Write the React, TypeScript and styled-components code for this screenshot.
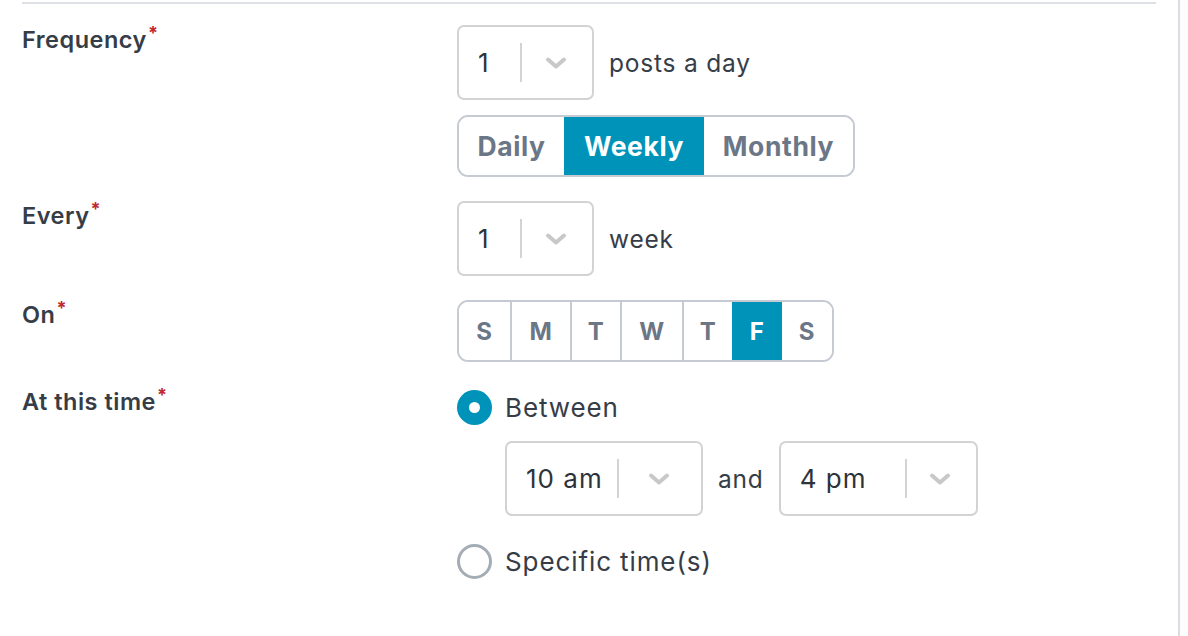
import styled, { createGlobalStyle } from "styled-components";

const GlobalStyle = createGlobalStyle`
  body {
    margin: 0;
    background: #fcfcfc;
    font-family: Inter, "Noto Sans", sans-serif;
  }
`;

const Panel = styled.div`
  width: 1180px;
  height: 636px;
  background: #ffffff;
  border-right: 2px solid #d9dde2;
  padding-top: 2px;
  box-sizing: border-box;
`;

const Divider = styled.div`
  height: 2px;
  margin: 0 22px;
  background: #dde1e6;
`;

const Form = styled.div`
  display: grid;
  grid-template-columns: 435px 1fr;
  row-gap: 24px;
  padding: 21px 0 0 22px;
`;

const Label = styled.div<{ $top?: number }>`
  font-size: 23.5px;
  line-height: 24px;
  font-weight: 600;
  color: #363d47;
  padding-top: ${(p) => p.$top ?? 3}px;
  letter-spacing: 0.5px;
`;

const Req = styled.sup`
  color: #c2262e;
  font-size: 18px;
  font-weight: 700;
  margin-left: 1px;
  vertical-align: 9px;
  line-height: 0;
`;

const Column = styled.div<{ $gap?: number }>`
  display: flex;
  flex-direction: column;
  align-items: flex-start;
  gap: ${(p) => p.$gap ?? 0}px;
`;

const Line = styled.div<{ $indent?: number; $top?: number }>`
  display: flex;
  align-items: center;
  gap: 15px;
  margin-left: ${(p) => p.$indent ?? 0}px;
  margin-top: ${(p) => p.$top ?? 0}px;
  font-size: 24.5px;
  letter-spacing: 0.8px;
  color: #363d47;
`;

const SelectBox = styled.div<{ $width: number }>`
  display: flex;
  align-items: center;
  width: ${(p) => p.$width}px;
  height: 75px;
  box-sizing: border-box;
  border: 2px solid #d3d3d3;
  border-radius: 7px;
  background: #fff;
`;

const SelectValue = styled.div<{ $width: number }>`
  width: ${(p) => p.$width}px;
  box-sizing: border-box;
  padding-left: 19px;
  font-size: 26px;
  letter-spacing: 1px;
  color: #2e333a;
`;

const SelectSep = styled.div`
  width: 2px;
  height: 39px;
  background: #d3d3d3;
`;

const Chevron = styled.div`
  flex: 1;
  display: flex;
  justify-content: center;
  padding-right: 2px;
`;

const Segmented = styled.div`
  display: inline-flex;
  height: 62px;
  border: 2px solid #c6cbd3;
  border-radius: 11px;
  overflow: hidden;
  box-sizing: border-box;
`;

const Segment = styled.div<{ $width: number; $active?: boolean; $size: number; $divided?: boolean }>`
  width: ${(p) => p.$width}px;
  display: flex;
  align-items: center;
  justify-content: center;
  font-size: ${(p) => p.$size}px;
  font-weight: 700;
  color: ${(p) => (p.$active ? "#ffffff" : "#6b7686")};
  background: ${(p) => (p.$active ? "#0093b9" : "#ffffff")};
  border-left: ${(p) => (p.$divided ? "2px solid #c6cbd3" : "none")};
  box-sizing: border-box;
  letter-spacing: 0.6px;
`;

const RadioRow = styled.div<{ $top?: number }>`
  display: flex;
  align-items: center;
  gap: 13px;
  height: 35px;
  margin-top: ${(p) => p.$top ?? 0}px;
  font-size: 26px;
  letter-spacing: 0.9px;
  color: #363d47;
`;

const RadioCircle = styled.div<{ $checked?: boolean }>`
  width: 35px;
  height: 35px;
  border-radius: 50%;
  box-sizing: border-box;
  display: flex;
  align-items: center;
  justify-content: center;
  background: ${(p) => (p.$checked ? "#0093b9" : "#ffffff")};
  border: ${(p) => (p.$checked ? "none" : "3px solid #a4acb6")};
  &::after {
    content: "";
    display: ${(p) => (p.$checked ? "block" : "none")};
    width: 11px;
    height: 11px;
    border-radius: 50%;
    background: #ffffff;
  }
`;

function Select({ value, width, valueWidth }: { value: string; width: number; valueWidth: number }) {
  return (
    <SelectBox $width={width}>
      <SelectValue $width={valueWidth}>{value}</SelectValue>
      <SelectSep />
      <Chevron>
        <svg width="24" height="14" viewBox="0 0 24 14">
          <path d="M4 3.5 L12 10.5 L20 3.5" fill="none" stroke="#c8c8c8" strokeWidth="4" strokeLinecap="round" strokeLinejoin="round" />
        </svg>
      </Chevron>
    </SelectBox>
  );
}

const periods = [
  { name: "Daily", width: 105 },
  { name: "Weekly", width: 140, active: true },
  { name: "Monthly", width: 149 },
];

const days = [
  { d: "S", w: 51 },
  { d: "M", w: 60 },
  { d: "T", w: 50 },
  { d: "W", w: 62 },
  { d: "T", w: 50 },
  { d: "F", w: 50, active: true },
  { d: "S", w: 50 },
];

export default function App() {
  return (
    <>
      <GlobalStyle />
      <Panel>
        <Divider />
        <Form>
          <Label>
            Frequency<Req>*</Req>
          </Label>
          <Column $gap={15}>
            <Line>
              <Select value="1" width={137} valueWidth={61} />
              <span>posts a day</span>
            </Line>
            <Segmented>
              {periods.map((p, i) => (
                <Segment key={p.name} $width={p.width} $active={p.active} $size={26.5} $divided={i > 0 && !p.active && !periods[i - 1].active}>
                  {p.name}
                </Segment>
              ))}
            </Segmented>
          </Column>

          <Label>
            Every<Req>*</Req>
          </Label>
          <Line>
            <Select value="1" width={137} valueWidth={61} />
            <span>week</span>
          </Line>

          <Label>
            On<Req>*</Req>
          </Label>
          <div>
            <Segmented>
              {days.map((d, i) => (
                <Segment key={i} $width={d.w} $active={d.active} $size={24} $divided={i > 0 && !d.active && !days[i - 1].active}>
                  {d.d}
                </Segment>
              ))}
            </Segmented>
          </div>

          <Label $top={4}>
            At this time<Req>*</Req>
          </Label>
          <Column $gap={0}>
            <RadioRow $top={4}>
              <RadioCircle $checked />
              Between
            </RadioRow>
            <Line $indent={48} $top={16}>
              <Select value="10 am" width={198} valueWidth={110} />
              <span>and</span>
              <Select value="4 pm" width={199} valueWidth={124} />
            </Line>
            <RadioRow $top={28}>
              <RadioCircle />
              Specific time(s)
            </RadioRow>
          </Column>
        </Form>
      </Panel>
    </>
  );
}
